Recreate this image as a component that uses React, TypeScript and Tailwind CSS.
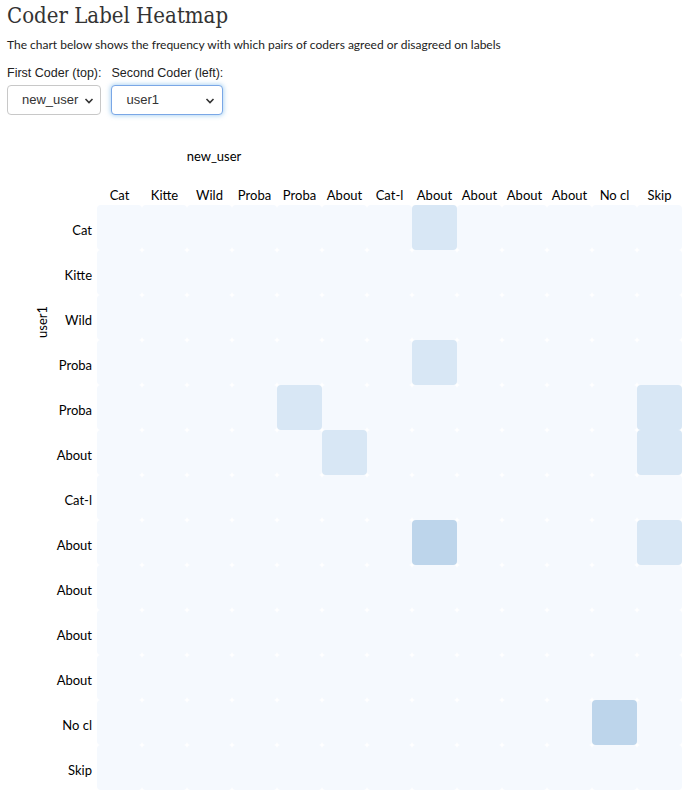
const cols = ["Cat", "Kitte", "Wild", "Proba", "Proba", "About", "Cat-l", "About", "About", "About", "About", "No cl", "Skip"];
const rows = ["Cat", "Kitte", "Wild", "Proba", "Proba", "About", "Cat-l", "About", "About", "About", "About", "No cl", "Skip"];

// row,col -> level (1 light, 2 darker)
const hits: Record<string, number> = {
  "0,7": 1,
  "3,7": 1,
  "4,4": 1,
  "4,12": 1,
  "5,5": 1,
  "5,12": 1,
  "7,7": 2,
  "7,12": 1,
  "11,11": 2,
};

const fills = ["#f5f9fe", "#d8e7f5", "#bdd5eb"];

const CELL = 45;
const X0 = 97;
const Y0 = 85; // relative to svg top

function Heatmap() {
  return (
    <svg width={692} height={686} className="block mt-[5px]" style={{ fontFamily: "Lato, 'Open Sans', sans-serif" }}>
      <text x={214} y={41} textAnchor="middle" fontSize={13} fill="#000">
        new_user
      </text>
      <text
        x={0}
        y={0}
        textAnchor="middle"
        fontSize={13}
        fill="#000"
        transform="translate(47 202) rotate(-90)"
      >
        user1
      </text>
      {cols.map((c, i) => (
        <text key={"c" + i} x={X0 + i * CELL + CELL / 2} y={Y0 - 5} textAnchor="middle" fontSize={13} fill="#000">
          {c}
        </text>
      ))}
      {rows.map((r, j) => (
        <text key={"r" + j} x={X0 - 5} y={Y0 + j * CELL + CELL / 2 + 7} textAnchor="end" fontSize={13} fill="#000">
          {r}
        </text>
      ))}
      {rows.map((_, j) =>
        cols.map((_, i) => {
          const lvl = hits[`${j},${i}`] ?? 0;
          return (
            <rect
              key={`${j}-${i}`}
              x={X0 + i * CELL}
              y={Y0 + j * CELL}
              width={CELL}
              height={CELL}
              rx={4}
              fill={fills[lvl]}
            />
          );
        })
      )}
    </svg>
  );
}

export default function App() {
  return (
    <div className="w-[692px] h-[806px] bg-white overflow-hidden">
      <div className="px-[7px] pt-[1px]">
        <h1 className="text-[22px] leading-[30px] text-[#333] font-['DejaVu_Serif_Condensed','DejaVu_Serif',serif]">Coder Label Heatmap</h1>
        <p className="mt-[6px] text-[12px] leading-[16px] text-[#222] font-['Lato',sans-serif]">
          The chart below shows the frequency with which pairs of coders agreed or disagreed on labels
        </p>
        <div className="mt-[13px] flex gap-[10px] font-['Liberation_Sans',Arial,sans-serif] text-[12.5px] text-[#222]">
          <div className="flex flex-col gap-[4px]">
            <span className="leading-[15px]">First Coder (top):</span>
            <div className="relative h-[30px] w-[94px] rounded-[4px] border border-[#c8c8c8] bg-white flex items-center">
              <span className="pl-[14px] text-[13px] text-[#333]">new_user</span>
              <svg className="absolute right-[6px] top-[11px]" width="10" height="8" viewBox="0 0 10 8">
                <path d="M1.5 2 L5 5.5 L8.5 2" fill="none" stroke="#333" strokeWidth="1.6" />
              </svg>
            </div>
          </div>
          <div className="flex flex-col gap-[4px]">
            <span className="leading-[15px]">Second Coder (left):</span>
            <div className="relative h-[30px] w-[112px] rounded-[4px] border border-[#7aa7e6] bg-white flex items-center shadow-[0_0_4px_1px_rgba(102,175,233,0.5)]">
              <span className="pl-[14px] text-[13px] text-[#333]">user1</span>
              <svg className="absolute right-[7px] top-[11px]" width="10" height="8" viewBox="0 0 10 8">
                <path d="M1.5 2 L5 5.5 L8.5 2" fill="none" stroke="#333" strokeWidth="1.6" />
              </svg>
            </div>
          </div>
        </div>
      </div>
      <Heatmap />
    </div>
  );
}
